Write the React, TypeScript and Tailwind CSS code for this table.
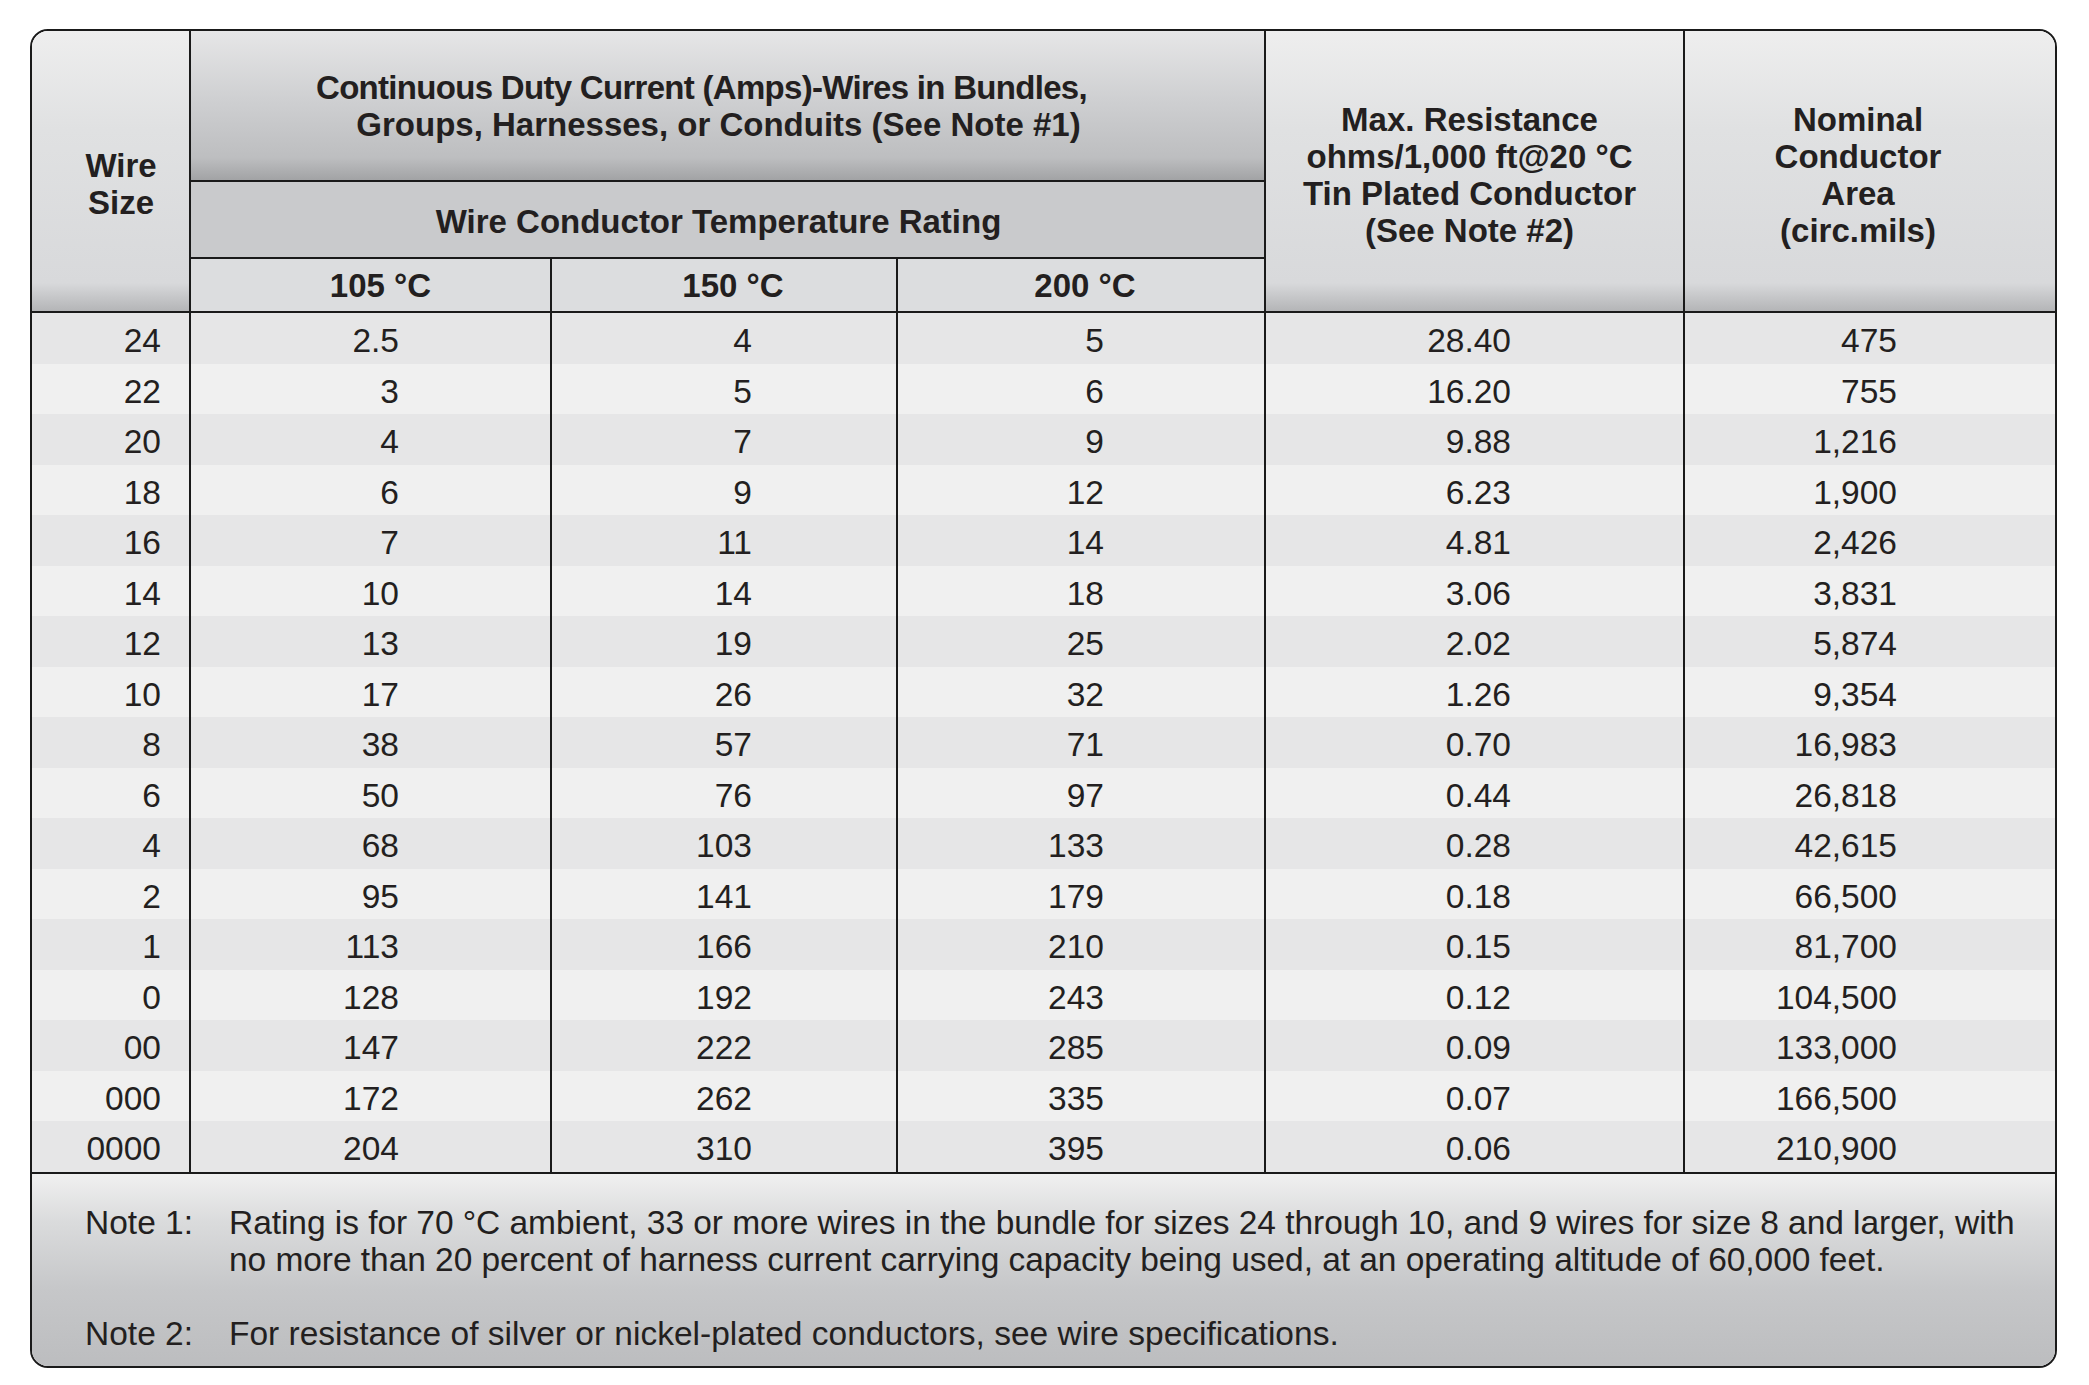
const rows = [
  ['24', '2.5', '4', '5', '28.40', '475'],
  ['22', '3', '5', '6', '16.20', '755'],
  ['20', '4', '7', '9', '9.88', '1,216'],
  ['18', '6', '9', '12', '6.23', '1,900'],
  ['16', '7', '11', '14', '4.81', '2,426'],
  ['14', '10', '14', '18', '3.06', '3,831'],
  ['12', '13', '19', '25', '2.02', '5,874'],
  ['10', '17', '26', '32', '1.26', '9,354'],
  ['8', '38', '57', '71', '0.70', '16,983'],
  ['6', '50', '76', '97', '0.44', '26,818'],
  ['4', '68', '103', '133', '0.28', '42,615'],
  ['2', '95', '141', '179', '0.18', '66,500'],
  ['1', '113', '166', '210', '0.15', '81,700'],
  ['0', '128', '192', '243', '0.12', '104,500'],
  ['00', '147', '222', '285', '0.09', '133,000'],
  ['000', '172', '262', '335', '0.07', '166,500'],
  ['0000', '204', '310', '395', '0.06', '210,900'],
]

// right padding of each data column, so the figures line up like the print
const cellPad = ['pr-[28px]', 'pr-[151px]', 'pr-[144px]', 'pr-[160px]', 'pr-[172px]', 'pr-[158px]']

const lightHead =
  'bg-[linear-gradient(to_bottom,#eeeeee_0%,#e0e1e2_35%,#d8d9db_90%,#b4b5b7_100%)]'

export default function App() {
  return (
    <div className="min-h-screen bg-white pl-[30px] pt-[29px] font-['Liberation_Sans',Arial,Helvetica,sans-serif] text-[#231f20]">
      <div className="w-[2027px] border-2 border-[#1a1a1a] rounded-[18px] overflow-hidden">
        {/* header */}
        <div className="flex h-[282px] border-b-2 border-[#1a1a1a] font-bold text-[33px] leading-[37px]">
          <div className={`w-[159px] border-r-2 border-[#1a1a1a] flex items-center justify-center pl-[21px] pt-[26px] text-center ${lightHead}`}>
            <div>
              Wire
              <br />
              Size
            </div>
          </div>

          <div className="w-[1075px] border-r-2 border-[#1a1a1a] flex flex-col">
            <div className="h-[151px] border-b-2 border-[#1a1a1a] flex items-center justify-center pr-[18px] text-center bg-[linear-gradient(to_bottom,#e6e6e7_0%,#cfd0d2_45%,#bdbec0_85%,#a2a3a5_100%)]">
              <div>
                <div className="pr-[34px] tracking-[-0.7px]">Continuous Duty Current (Amps)-Wires in Bundles,</div>
                <div>Groups, Harnesses, or Conduits (See Note #1)</div>
              </div>
            </div>
            <div className="h-[77px] border-b-2 border-[#1a1a1a] flex items-center justify-center pr-[18px] pt-[4px] bg-[#c9cacc]">
              Wire Conductor Temperature Rating
            </div>
            <div className="flex-1 flex bg-[#dcdddf]">
              <div className="w-[361px] border-r-2 border-[#1a1a1a] flex items-center justify-center pl-[20px]">105 °C</div>
              <div className="w-[346px] border-r-2 border-[#1a1a1a] flex items-center justify-center pl-[18px]">150 °C</div>
              <div className="flex-1 flex items-center justify-center pl-[8px]">200 °C</div>
            </div>
          </div>

          <div className={`w-[419px] border-r-2 border-[#1a1a1a] flex items-center justify-center pr-[10px] pt-[7px] text-center ${lightHead}`}>
            <div>
              Max. Resistance
              <br />
              ohms/1,000 ft@20 °C
              <br />
              Tin Plated Conductor
              <br />
              (See Note #2)
            </div>
          </div>

          <div className={`flex-1 flex items-center justify-center pr-[24px] pt-[7px] text-center ${lightHead}`}>
            <div>
              Nominal
              <br />
              Conductor
              <br />
              Area
              <br />
              (circ.mils)
            </div>
          </div>
        </div>

        {/* data */}
        <div className="border-b-2 border-[#1a1a1a] text-[33.5px]">
          {rows.map((row, i) => (
            <div
              key={row[0]}
              className={`grid grid-cols-[159px_361px_346px_368px_419px_1fr] h-[50.5px] ${i % 2 === 0 ? 'bg-[#e6e6e7]' : 'bg-[#f0f0f0]'}`}
            >
              {row.map((v, j) => (
                <div
                  key={j}
                  className={`flex items-center justify-end pt-[3px] ${cellPad[j]} ${j < 5 ? 'border-r-2 border-[#1a1a1a]' : ''}`}
                >
                  {v}
                </div>
              ))}
            </div>
          ))}
        </div>

        {/* notes */}
        <div className="h-[192px] pt-[30px] pl-[53px] text-[33.5px] leading-[37px] bg-[linear-gradient(to_bottom,#f0f0f0_0%,#dadbdc_25%,#c6c7c9_60%,#bcbdbf_100%)]">
          <div className="flex">
            <div className="w-[144px] shrink-0">Note 1:</div>
            <div className="whitespace-nowrap tracking-[-0.05px]">
              Rating is for 70 °C ambient, 33 or more wires in the bundle for sizes 24 through 10, and 9 wires for size 8 and larger, with
              <br />
              no more than 20 percent of harness current carrying capacity being used, at an operating altitude of 60,000 feet.
            </div>
          </div>
          <div className="flex mt-[37px]">
            <div className="w-[144px] shrink-0">Note 2:</div>
            <div>For resistance of silver or nickel-plated conductors, see wire specifications.</div>
          </div>
        </div>
      </div>
    </div>
  )
}
